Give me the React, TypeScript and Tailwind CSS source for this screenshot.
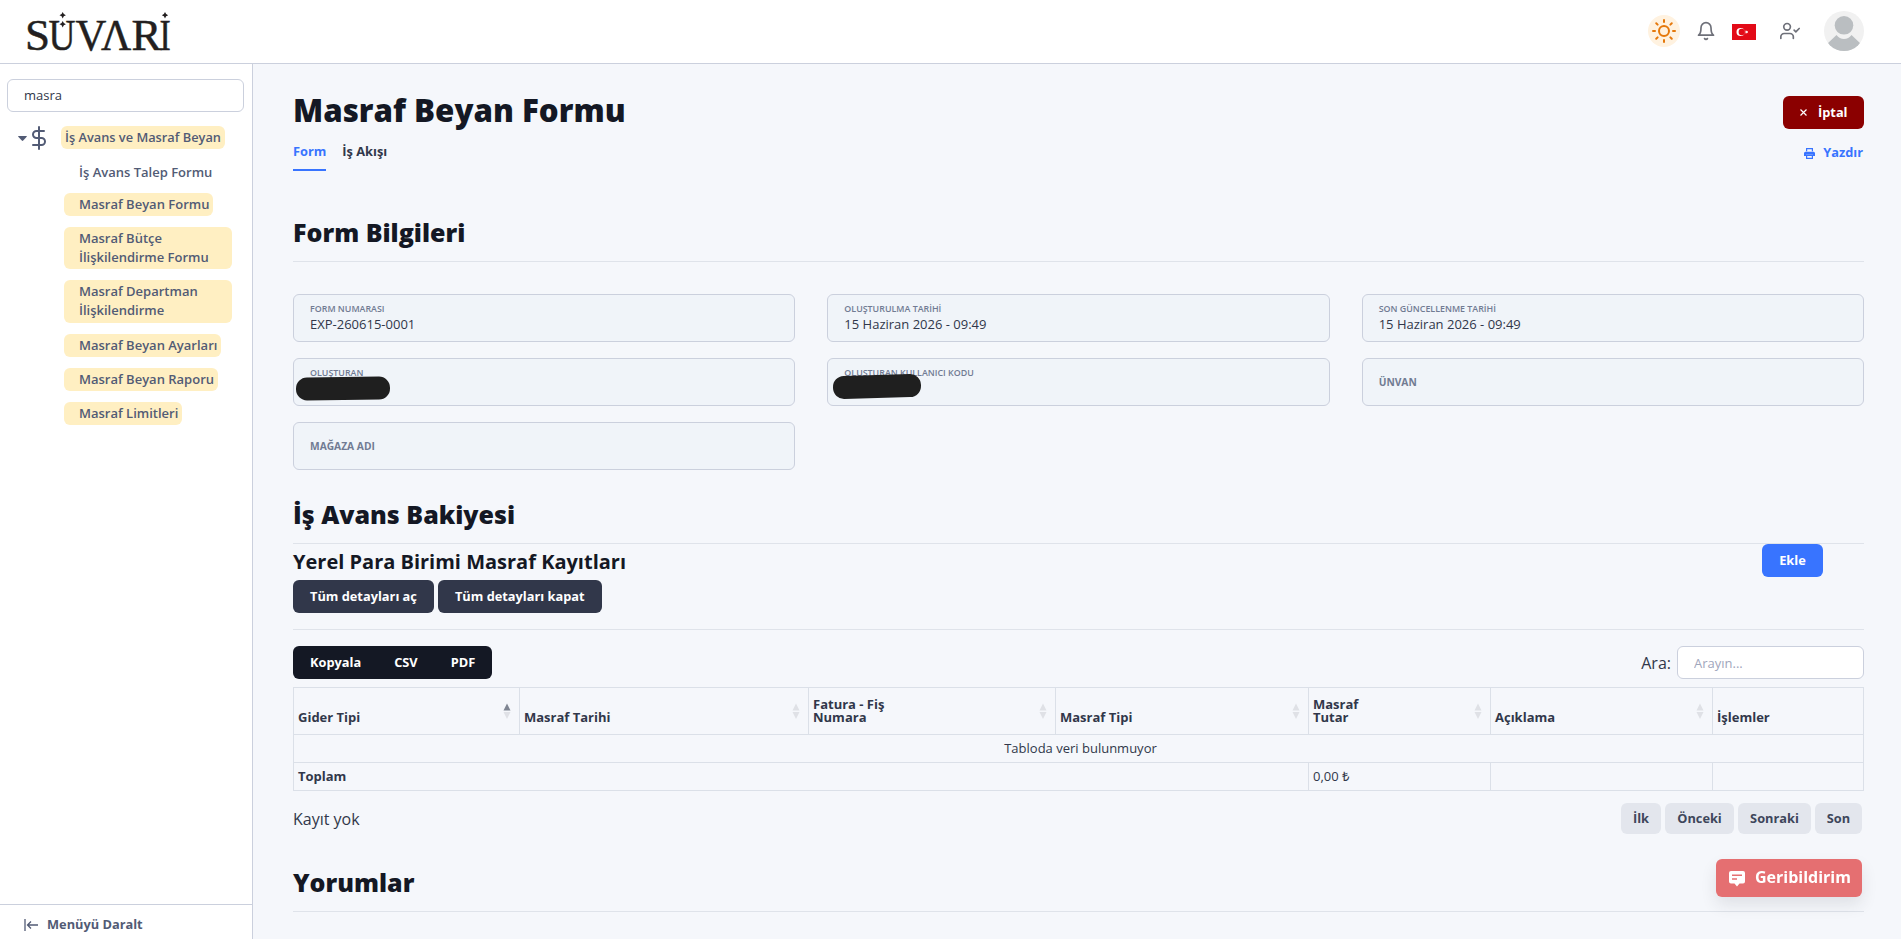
import React from 'react';
import { FiSun, FiBell, FiUserCheck, FiDollarSign } from 'react-icons/fi';

const menuItems = [
  { label: 'Masraf Beyan Formu', className: 'mt-4' },
  { label: 'Masraf Bütçe İlişkilendirme Formu', className: 'mt-[11px] h-[42px] w-[168px]' },
  { label: 'Masraf Departman İlişkilendirme', className: 'mt-[11px] h-[43px] w-[168px]' },
  { label: 'Masraf Beyan Ayarları', className: 'mt-[11px]' },
  { label: 'Masraf Beyan Raporu', className: 'mt-[11px]' },
  { label: 'Masraf Limitleri', className: 'mt-[11px]' },
];

const columns = [
  { label: 'Gider Tipi', width: 'w-[226px]', sort: 'asc' },
  { label: 'Masraf Tarihi', width: 'w-[289px]', sort: 'both' },
  { label: 'Fatura - Fiş\nNumara', width: 'w-[247px]', sort: 'both' },
  { label: 'Masraf Tipi', width: 'w-[253px]', sort: 'both' },
  { label: 'Masraf\nTutar', width: 'w-[182px]', sort: 'both' },
  { label: 'Açıklama', width: 'w-[222px]', sort: 'both' },
  { label: 'İşlemler', width: 'w-[151px]', sort: '' },
];

export default function App() {
  return (
    <div className="h-[939px] w-[1901px] overflow-hidden bg-[#f5f7fb] font-['Open_Sans',sans-serif] text-[12.8px] leading-[19px] text-[#31374a]">
      <Header />
      <div className="flex h-[875px]">
        <Sidebar />
        <main className="min-w-0 flex-1 pl-10 pr-[37px] pt-[27px]">
          <PageHead />

          <SectionTitle className="mt-[46px]">Form Bilgileri</SectionTitle>
          <div className="mt-8 grid grid-cols-3 gap-x-8 gap-y-4">
            <Field label="Form Numarası" value="EXP-260615-0001" />
            <Field label="Oluşturulma Tarihi" value="15 Haziran 2026 - 09:49" />
            <Field label="Son Güncellenme Tarihi" value="15 Haziran 2026 - 09:49" />
            <Field label="Oluşturan" masked="left-[2px] top-[18px] h-[23px] w-[94px] rotate-[-0.7deg]" />
            <Field label="Oluşturan Kullanıcı Kodu" masked="left-[5px] top-[16px] h-[23px] w-[88px] rotate-[-1.6deg]" />
            <Field label="Ünvan" />
            <Field label="Mağaza Adı" />
          </div>

          <SectionTitle className="mt-[29px]">İş Avans Bakiyesi</SectionTitle>
          <div className="flex justify-between border-b border-[#dfe3ea] pb-4">
            <div className="pt-[6px]">
              <h4 className="text-[20px] font-bold leading-6 text-[#141824]">Yerel Para Birimi Masraf Kayıtları</h4>
              <div className="mt-[6px] flex gap-1">
                <button className="h-[33px] rounded-md bg-[#31374a] px-[17px] font-bold text-white">Tüm detayları aç</button>
                <button className="h-[33px] rounded-md bg-[#31374a] px-[17px] font-bold text-white">Tüm detayları kapat</button>
              </div>
            </div>
            <button className="mr-[41px] h-[33px] w-[61px] rounded-md bg-[#3874ff] font-bold text-white">Ekle</button>
          </div>

          <div className="mt-4 flex items-center justify-between">
            <div className="flex h-[33px] items-center overflow-hidden rounded-md bg-[#141824] font-bold text-white">
              <button className="px-[17px]">Kopyala</button>
              <button className="px-4">CSV</button>
              <button className="px-[17px]">PDF</button>
            </div>
            <label className="flex items-center gap-[6px] text-base leading-6">
              Ara:
              <input
                placeholder="Arayın..."
                className="h-[33px] w-[187px] rounded-md border border-[#cbd0dd] bg-white px-4 text-[13px] font-medium placeholder:text-[#9fa6bc]"
              />
            </label>
          </div>

          <ExpenseTable />

          <div className="mt-3 flex h-[31px] items-center justify-between">
            <span className="text-base leading-6">Kayıt yok</span>
            <div className="mr-[2px] flex gap-1 font-bold text-[#3e465b]">
              <button className="h-[31px] w-10 rounded-md bg-[#e3e6ed]">İlk</button>
              <button className="h-[31px] w-[69px] rounded-md bg-[#e3e6ed]">Önceki</button>
              <button className="h-[31px] w-[73px] rounded-md bg-[#e3e6ed]">Sonraki</button>
              <button className="h-[31px] w-[47px] rounded-md bg-[#e3e6ed]">Son</button>
            </div>
          </div>

          <SectionTitle className="mt-[33px]">Yorumlar</SectionTitle>
        </main>
      </div>

      {/* Floating feedback button */}
      <button className="fixed left-[1716px] top-[859px] flex h-[38px] w-[146px] items-center rounded-md bg-[#e56f71] pl-[13px] text-base font-bold text-white shadow-[0_8px_16px_rgba(36,40,46,0.1)]">
        <svg width="16" height="16" viewBox="0 0 16 16" className="mt-[1px]">
          <path fill="#fff" d="M2 0h12a2 2 0 0 1 2 2v8.500a2 2 0 0 1-2 2h-3.500L8 15.500l-2.500-3H2a2 2 0 0 1-2-2V2a2 2 0 0 1 2-2z" />
          <path stroke="#e56f71" strokeWidth="1.600" d="M3 4.300h10M3 8h5" />
        </svg>
        <span className="-mt-[2px] ml-[10px]">Geribildirim</span>
      </button>
    </div>
  );
}

const Header: React.FC = () => (
  <header className="flex h-16 items-center justify-between border-b border-[#cbd0dd] bg-white pl-[21px] pr-[37px]">
    <Logo />
    <div className="-mt-px flex items-center text-[#6e7079]">
      <div className="flex h-8 w-8 items-center justify-center rounded-full bg-[#fff2e0] text-[#e5780b]">
        <FiSun size={24} />
      </div>
      <FiBell size={20} className="ml-4" />
      <svg width="24" height="16" viewBox="0 0 24 16" className="ml-4 mt-[2px]">
        <path fill="#e30a17" d="M0 0h24v16H0z" />
        <circle cx="8.600" cy="8" r="4.100" fill="#fff" />
        <circle cx="9.800" cy="8" r="3.200" fill="#e30a17" />
        <path fill="#fff" d="M12.300 8l1.500-.5v-1.600l1 1.300 1.500-.5-.9 1.300.9 1.300-1.500-.5-1 1.300V8.500z" />
      </svg>
      <FiUserCheck size={20} className="ml-6" />
      <svg width="40" height="40" viewBox="0 0 40 40" className="ml-6">
        <defs>
          <clipPath id="avatar">
            <circle cx="20" cy="20" r="20" />
          </clipPath>
        </defs>
        <g clipPath="url(#avatar)">
          <path fill="#f1f1f1" d="M0 0h40v40H0z" />
          <circle cx="20" cy="14.300" r="9.300" fill="#babec1" />
          <path fill="#babec1" d="M3 33l9.500-9c2 2.500 4.500 4 7.500 4s5.500-1.500 7.500-4L37 33v7H3z" />
        </g>
      </svg>
    </div>
  </header>
);

const Logo: React.FC = () => (
  <svg width="158" height="63" viewBox="21 0 158 63" role="img" aria-label="SÜVARİ" className="overflow-visible">
    <g fill="#231f20" stroke="#231f20" strokeWidth=".5" fontFamily="Liberation Serif, serif" fontSize="45">
      <text transform="translate(25 49.500)">S</text>
      <text transform="translate(48.500 49.500) scale(.83 1)">U</text>
      <text transform="translate(75.500 49.500) scale(.95 1)">V</text>
      <text transform="translate(101 49.500) scale(.93 1)">Λ</text>
      <text transform="translate(131.500 49.500)">R</text>
      <text transform="translate(159.500 49.500) scale(.75 1)">I</text>
    </g>
    <path fill="#231f20" d="M62.700 12l1.100 2.100 2.100 1.100-2.100 1.100-1.100 2.100-1.100-2.100-2.100-1.100 2.100-1.100zM62.700 21l1.100 2.100 2.100 1.100-2.100 1.100-1.100 2.100-1.100-2.100-2.100-1.100 2.100-1.100zM165 12l1.100 2.100 2.100 1.100-2.100 1.100-1.100 2.100-1.100-2.100-2.100-1.100 2.100-1.100z" />
  </svg>
);

const Sidebar: React.FC = () => (
  <aside className="flex w-[253px] shrink-0 flex-col border-r border-[#cbd0dd] bg-white font-semibold text-[#525b75]">
    <input
      defaultValue="masra"
      className="ml-[7px] mt-[15px] h-[33px] w-[237px] shrink-0 rounded-md border border-[#cbd0dd] px-4 pb-[2px] text-[13px] font-medium text-[#31374a]"
    />
    <div className="mt-[14px] flex h-6 items-center pl-[18px]">
      <svg width="9" height="5" viewBox="0 0 9 5">
        <path fill="currentColor" d="M.6 0h7.800q.8 0 .3.800L5.200 4.600q-.7.600-1.400 0L.3.800Q-.2 0 .6 0z" />
      </svg>
      <FiDollarSign size={24} />
      <span className="-mt-px ml-[10px] h-[23px] rounded-md bg-[#ffefc2] px-1 pt-[2px]">İş Avans ve Masraf Beyan</span>
    </div>
    <div className="flex flex-1 flex-col items-start pl-16 text-[13px]">
      <span className="mt-[13px] h-[14px] pl-[15px]">İş Avans Talep Formu</span>
      {menuItems.map((item) => (
        <a key={item.label} className={`min-h-[23px] rounded-md bg-[#ffefc2] pl-[15px] pr-1 pt-[2px] ${item.className}`}>
          {item.label}
        </a>
      ))}
    </div>
    <div className="flex h-[35px] items-center border-t border-[#cbd0dd] pl-6 pt-[5px] font-bold">
      <svg width="14" height="12" viewBox="0 0 14 12" fill="none" stroke="currentColor" strokeWidth="1.300">
        <path d="M1 0v12M14 6H4M7 2.500L3.500 6 7 9.500" />
      </svg>
      <span className="ml-[9px]">Menüyü Daralt</span>
    </div>
  </aside>
);

const PageHead: React.FC = () => (
  <div className="flex justify-between">
    <div>
      <h2 className="text-[31.25px] font-extrabold leading-[38px] text-[#141824]">Masraf Beyan Formu</h2>
      <div className="mt-[13px] flex gap-4 font-bold">
        <a className="h-[29px] border-b-2 border-[#3874ff] text-[#3874ff]">Form</a>
        <a>İş Akışı</a>
      </div>
    </div>
    <div className="flex flex-col items-end pt-[5px] font-bold">
      <button className="flex h-[33px] w-[81px] items-center rounded-md bg-[#8b0000] pl-[17px] text-white">
        <svg width="7" height="7" viewBox="0 0 7 7" stroke="#fff" strokeWidth="1.200">
          <path d="M.5.500l6 6M6.500.500l-6 6" />
        </svg>
        <span className="ml-[11px]">İptal</span>
      </button>
      <a className="mr-px mt-[14px] flex items-center text-[#3874ff]">
        <svg width="11" height="11" viewBox="0 0 11 11" fill="currentColor" className="mt-[2px]">
          <path d="M2 0h7v3.200H7.800V1.300H3.200v1.900H2zM1.500 3.800h8A1.500 1.500 0 0 1 11 5.300V8H9V6.600H2V8H0V5.300a1.500 1.500 0 0 1 1.500-1.500z" />
          <path d="M2 6.600h7V11H2zM3.200 8v1.800h4.600V8z" fillRule="evenodd" />
        </svg>
        <span className="ml-2">Yazdır</span>
      </a>
    </div>
  </div>
);

const SectionTitle: React.FC<{ className: string; children: React.ReactNode }> = ({ className, children }) => (
  <h3 className={`border-b border-[#dfe3ea] pb-[14px] text-[25px] font-extrabold leading-[30px] text-[#141824] ${className}`}>
    {children}
  </h3>
);

const Field: React.FC<{ label: string; value?: string; masked?: string }> = ({ label, value, masked }) => (
  <div lang="tr" className="relative flex h-12 flex-col justify-center rounded-md border border-[#cbd0dd] bg-[#f0f4f9] pl-4">
    {value || masked ? (
      <>
        <span className="text-[8.900px] font-semibold uppercase leading-[12px] text-[#717b93]">{label}</span>
        <span className="h-[19px] text-[13px] font-medium">{value}</span>
      </>
    ) : (
      <span className="text-[10.240px] font-bold uppercase leading-[12px] text-[#717b93]">{label}</span>
    )}
    {masked && <div className={`absolute rounded-[11px] bg-[#1f1f1f] ${masked}`} />}
  </div>
);

const ExpenseTable: React.FC = () => (
  <table className="mt-2 w-full table-fixed border-collapse text-left text-[13px] [&_td]:border [&_td]:border-[#dbe0e8] [&_td]:px-1 [&_td]:py-0 [&_th]:border [&_th]:border-[#dbe0e8] [&_th]:px-1">
    <thead>
      <tr className="h-[47px]">
        {columns.map((col) => (
          <th key={col.label} className={`relative pb-[10px] align-bottom font-bold leading-[13px] ${col.width}`}>
            <span className="block whitespace-pre-line">{col.label}</span>
            {col.sort && (
              <svg width="8" height="16" viewBox="0 0 8 16" className="absolute right-2 top-[15px]">
                <path fill={col.sort === 'asc' ? '#7f8592' : '#dfe1e6'} d="M4 .500L7.500 7.500h-7z" />
                <path fill="#dfe1e6" d="M4 16L.5 9h7z" />
              </svg>
            )}
          </th>
        ))}
      </tr>
    </thead>
    <tbody>
      <tr className="h-7">
        <td colSpan={7} className="text-center">
          <span className="ml-1">Tabloda veri bulunmuyor</span>
        </td>
      </tr>
      <tr className="h-7">
        <td colSpan={4} className="font-bold">Toplam</td>
        <td>0,00 ₺</td>
        <td />
        <td />
      </tr>
    </tbody>
  </table>
);
